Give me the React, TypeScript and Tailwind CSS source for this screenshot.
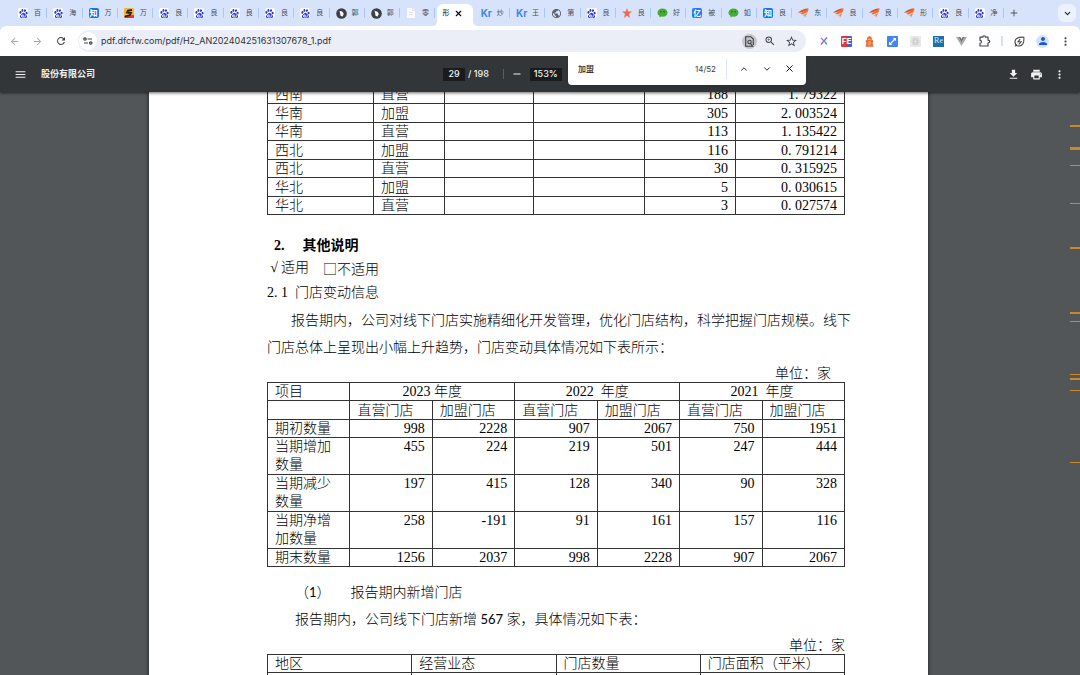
import type { ReactNode } from 'react'
import { ChevronDown, ChevronUp, Plus, X } from 'lucide-react'
import {
  MdArrowBack,
  MdArrowForward,
  MdDownload,
  MdMenu,
  MdMoreVert,
  MdPerson,
  MdPrint,
  MdPublic,
  MdRefresh,
  MdRemove,
  MdStarBorder,
  MdZoomIn,
} from 'react-icons/md'
import { SiBaidu } from 'react-icons/si'

type Favicon = 'baidu' | 'zhihu' | 'wanfang' | 'bird' | 'file' | 'kr' | 'globe' | 'star' | 'wechat' | 'yi' | 'east' | 'none'

interface Tab {
  icon: Favicon
  label: string
  active?: boolean
}

const TABS: Tab[] = [
  { icon: 'baidu', label: '百' },
  { icon: 'baidu', label: '海' },
  { icon: 'zhihu', label: '万' },
  { icon: 'wanfang', label: '万' },
  { icon: 'baidu', label: '良' },
  { icon: 'baidu', label: '良' },
  { icon: 'baidu', label: '良' },
  { icon: 'baidu', label: '良' },
  { icon: 'baidu', label: '良' },
  { icon: 'bird', label: '郭' },
  { icon: 'bird', label: '郭' },
  { icon: 'file', label: '零' },
  { icon: 'none', label: '形', active: true },
  { icon: 'kr', label: '炒' },
  { icon: 'kr', label: '王' },
  { icon: 'globe', label: '第' },
  { icon: 'baidu', label: '良' },
  { icon: 'star', label: '良' },
  { icon: 'wechat', label: '好' },
  { icon: 'yi', label: '被' },
  { icon: 'wechat', label: '如' },
  { icon: 'zhihu', label: '良' },
  { icon: 'east', label: '东' },
  { icon: 'east', label: '良' },
  { icon: 'east', label: '良' },
  { icon: 'east', label: '形' },
  { icon: 'baidu', label: '良' },
  { icon: 'baidu', label: '净' },
]

const REGION_ROWS = [
  ['西南', '直营', '', '', '188', '1. 79322'],
  ['华南', '加盟', '', '', '305', '2. 003524'],
  ['华南', '直营', '', '', '113', '1. 135422'],
  ['西北', '加盟', '', '', '116', '0. 791214'],
  ['西北', '直营', '', '', '30', '0. 315925'],
  ['华北', '加盟', '', '', '5', '0. 030615'],
  ['华北', '直营', '', '', '3', '0. 027574'],
]

const STORE_ROWS = [
  { label: ['期初数量'], values: ['998', '2228', '907', '2067', '750', '1951'] },
  { label: ['当期增加', '数量'], values: ['455', '224', '219', '501', '247', '444'] },
  { label: ['当期减少', '数量'], values: ['197', '415', '128', '340', '90', '328'] },
  { label: ['当期净增', '加数量'], values: ['258', '-191', '91', '161', '157', '116'] },
  { label: ['期末数量'], values: ['1256', '2037', '998', '2228', '907', '2067'] },
]

// search hits along the scroll track: offset from the toolbar and thickness
const HITS = [
  { top: 33, size: 2 },
  { top: 55, size: 3 },
  { top: 73, size: 1 },
  { top: 111, size: 1 },
  { top: 155, size: 2 },
  { top: 220, size: 2 },
  { top: 229, size: 1 },
  { top: 282, size: 1 },
  { top: 286, size: 2 },
  { top: 298, size: 1 },
  { top: 370, size: 1 },
]

function FaviconMark({ icon }: { icon: Favicon }) {
  switch (icon) {
    case 'baidu':
      return (
        <span className="grid size-[10px] place-items-center rounded-[2px] bg-white text-[#2b35dc]">
          <SiBaidu size={9} />
        </span>
      )
    case 'zhihu':
      return (
        <span className="grid size-[10px] place-items-center rounded-[2px] bg-[#1772f6] text-[8px] leading-none font-bold text-white">
          知
        </span>
      )
    case 'yi':
      return (
        <span className="grid size-[10px] place-items-center rounded-[2px] bg-[#2878f5] text-[8px] leading-none font-bold text-white">
          亿
        </span>
      )
    case 'wanfang':
      return (
        <svg width="10" height="10" viewBox="0 0 10 10" aria-hidden="true">
          <rect width="10" height="10" rx="1" fill="#f7b52c" />
          <path d="M0 8l10-1v3H1z" fill="#df3426" />
          <path d="M8 2L4 2.600 3 4.500l4 .5-1 2-5 1.500" fill="none" stroke="#252018" strokeWidth="1.800" />
        </svg>
      )
    case 'bird':
      return (
        <svg width="11" height="11" viewBox="0 0 11 11" aria-hidden="true">
          <circle cx="5.500" cy="5.500" r="5.300" fill="#3a4046" />
          <path d="M3.500 2.800l3 .9 1.300 2.400-1.500 2.600-1.800-1.500z" fill="#fff" />
        </svg>
      )
    case 'file':
      return (
        <svg width="10" height="10" viewBox="0 0 10 10" aria-hidden="true">
          <path d="M1 0h5.500L9 2.500V10H1z" fill="#fafafa" />
          <path d="M6.500 0v2.500H9M3 4.500h4M3 6.500h4" fill="none" stroke="#d5d8dc" strokeWidth=".7" />
        </svg>
      )
    case 'kr':
      return <span className="w-[10px] text-[10px] leading-none font-bold text-[#4285f4]">Kr</span>
    case 'globe':
      return <MdPublic size={11} color="#5f6368" />
    case 'star':
      return (
        <svg width="10" height="10" viewBox="0 0 10 10" aria-hidden="true">
          <path d="M5 0l1.200 3.400L10 3.600 7 6l1 4-3-2.300L2 10l1-4L0 3.600l3.800-.2z" fill="#f26b4b" />
        </svg>
      )
    case 'wechat':
      return (
        <svg width="11" height="10" viewBox="0 0 11 10" aria-hidden="true">
          <path d="M5.500.6c2.900 0 5 1.800 5 4.100s-2.100 4.100-5 4.100l-1.400-.2L2.300 9.600l.2-1.700C1.200 7.100.5 6 .5 4.700.5 2.400 2.600.6 5.500.6z" fill="#45ad35" />
          <circle cx="3.900" cy="3.700" r=".7" fill="#1d5c18" />
          <circle cx="7.100" cy="3.700" r=".7" fill="#1d5c18" />
        </svg>
      )
    case 'east':
      return (
        <svg width="11" height="10" viewBox="0 0 11 10" aria-hidden="true">
          <path d="M0 4.800C2.500 2.200 6 .8 10.500.3L8 3 2.600 4.600z" fill="#e2522a" />
          <path d="M2.300 5.800C5 3.500 8 2.200 10.700.8L9.600 4.300 4.300 6.600z" fill="#f0703a" />
          <path d="M4.400 7.600L9.300 5 7 9.700 6.500 7.600z" fill="#f58a45" />
        </svg>
      )
    default:
      return null
  }
}

function TabItem({ tab }: { tab: Tab }) {
  if (tab.active) {
    return (
      <div className="flex h-[26px] min-w-0 flex-1 items-end px-[2px]">
        <div className="relative flex h-[22px] w-full items-center rounded-t-[6px] bg-white pb-1 pl-[5px]">
          <svg className="absolute bottom-0 -left-[5px]" width="5" height="5" viewBox="0 0 5 5" aria-hidden="true">
            <path d="M5 0v5H0c3 0 5-2 5-5z" fill="#fff" />
          </svg>
          <svg className="absolute -right-[5px] bottom-0" width="5" height="5" viewBox="0 0 5 5" aria-hidden="true">
            <path d="M0 0v5h5C2 5 0 3 0 0z" fill="#fff" />
          </svg>
          <button type="button" role="tab" aria-selected="true" className="text-[7px] leading-[12px] whitespace-nowrap">
            {tab.label}
          </button>
          <button type="button" aria-label="关闭标签页" className="ml-[5px]">
            <X size={9} strokeWidth={3} />
          </button>
        </div>
      </div>
    )
  }
  return (
    <div className="flex h-[26px] min-w-0 flex-1 items-center">
      <button type="button" role="tab" aria-selected="false" className="flex flex-1 items-center gap-[5px] pl-[6px]">
        <span className="flex w-[11px] shrink-0 items-center">
          <FaviconMark icon={tab.icon} />
        </span>
        <span className="text-[7px] leading-[12px] whitespace-nowrap text-[#474b52]">
          {tab.label}
        </span>
      </button>
      <span className="h-[10px] w-px bg-[#a8c7fa]" />
    </div>
  )
}

function IconButton({ label, children }: { label: string; children: ReactNode }) {
  return (
    <button type="button" aria-label={label} className="grid h-[22px] w-[23px] shrink-0 place-items-center">
      {children}
    </button>
  )
}

function Extensions() {
  return (
    <div className="ml-[6px] flex items-center pr-[3px] text-[#45484d]">
      <IconButton label="XPath">
        <svg width="8" height="8" viewBox="0 0 8 8" fill="none" strokeWidth="1.300">
          <path d="M1 1l3 3" stroke="#6d8df0" />
          <path d="M7 0.500L4 4" stroke="#9a58d8" />
          <path d="M4 4L1 7.500" stroke="#c94fc0" />
          <path d="M4 4l3 3.500" stroke="#45b47a" />
        </svg>
      </IconButton>
      <IconButton label="FeHelper">
        <span className="flex h-[11px] w-[11px] items-center justify-center rounded-[1px] bg-linear-to-r from-[#dc3a32] from-50% to-[#3667d8] to-50% text-[8px] leading-none font-bold text-white">
          FE
        </span>
      </IconButton>
      <IconButton label="助手">
        <svg width="9" height="11" viewBox="0 0 9 11">
          <path d="M4.500 0l2.300 1.500v2L8.500 5 7.600 7l.9 3.800H.5L1.400 7 .5 5l1.700-1.500v-2z" fill="#f06c33" />
          <path d="M3 3.300h3M3.500 6h2.500M3 8h3" stroke="#fbd0b0" strokeWidth=".8" />
        </svg>
      </IconButton>
      <IconButton label="截图">
        <svg width="11" height="11" viewBox="0 0 11 11">
          <rect width="11" height="11" rx="1" fill="#4285f4" />
          <path d="M3 8l5-5" stroke="#fff" strokeWidth="1.200" fill="none" />
          <path d="M5.700 2H9v3.300zM5.300 9H2V5.700z" fill="#fff" />
        </svg>
      </IconButton>
      <IconButton label="React Developer Tools">
        <svg width="11" height="11" viewBox="0 0 11 11" fill="none" stroke="#c6c7c9" strokeWidth=".7">
          <rect width="11" height="11" rx="1" fill="#e9e9ea" stroke="none" />
          <ellipse cx="5.500" cy="5.500" rx="4" ry="1.600" />
          <ellipse cx="5.500" cy="5.500" rx="4" ry="1.600" transform="rotate(60 5.500 5.500)" />
          <ellipse cx="5.500" cy="5.500" rx="4" ry="1.600" transform="rotate(120 5.500 5.500)" />
        </svg>
      </IconButton>
      <IconButton label="Reader">
        <span className="grid size-[11px] place-items-center bg-[#1f6fae] font-['Liberation_Serif',serif] text-[8px] leading-none text-[#c9eaf5]">
          Re
        </span>
      </IconButton>
      <IconButton label="Vue.js devtools">
        <svg width="11" height="9" viewBox="0 0 11 9">
          <path d="M0 0h2.300l3.200 5.300L8.700 0H11L5.500 9z" fill="#a9a9a9" />
          <path d="M2.300 0h2l1.200 2L6.700 0h2L5.500 5.300z" fill="#6e6e6e" />
        </svg>
      </IconButton>
      <IconButton label="扩展程序">
        <svg width="12" height="12" viewBox="0 0 12 12" fill="none" stroke="currentColor" strokeWidth="1.200" strokeLinejoin="round">
          <path d="M1 2.200h2.700c0-1.900 2.700-1.900 2.700 0H9v3c2.300 0 2.300 2.800 0 2.800v3H1V8.300c2 0 2-3 0-3z" />
        </svg>
      </IconButton>
      <span className="mx-[5px] h-[10px] w-[2px] bg-[#d3e3fd]" />
      <IconButton label="性能">
        <svg width="11" height="11" viewBox="0 0 11 11" fill="none" stroke="currentColor" strokeWidth="1.100">
          <path d="M9.800 1.200C5 .8 1 2 1 5.800 1 8.500 3 10 5.300 10 8.800 10 10.300 6.500 9.800 1.200zM2.500 8.800L.8 10.300" />
          <path d="M6.200 3L4 5.800h3L4.800 8.300" />
        </svg>
      </IconButton>
      <IconButton label="个人资料">
        <span className="grid size-[13px] place-items-center rounded-full bg-[#d3e3fd] text-[#1a5ad0]">
          <MdPerson size={12} />
        </span>
      </IconButton>
      <IconButton label="更多">
        <MdMoreVert size={13} />
      </IconButton>
    </div>
  )
}

function FindBar() {
  return (
    <div className="absolute top-full right-0 z-20 flex h-[33px] w-[238px] items-center rounded-[4px] bg-white pr-[5px] pl-[10px] shadow-md">
      <input
        aria-label="在网页中查找"
        defaultValue="加盟"
        className="min-w-0 flex-1 text-[8px] font-medium text-[#1f1f1f] outline-none"
      />
      <span className="text-[8px] text-[#3c4043]">14/52</span>
      <span className="mr-[5px] ml-[10px] h-[20px] w-px bg-[#d9e5fb]" />
      <IconButton label="上一个">
        <ChevronUp size={10} strokeWidth={2} />
      </IconButton>
      <IconButton label="下一个">
        <ChevronDown size={10} strokeWidth={2} />
      </IconButton>
      <IconButton label="关闭">
        <X size={11} strokeWidth={2} />
      </IconButton>
    </div>
  )
}

function AddressRow() {
  return (
    <div className="flex h-[30px] items-center rounded-t-[6px] bg-white pl-[3px]">
      <span className="flex text-[#a5a8ac]">
        <IconButton label="后退">
          <MdArrowBack size={11} />
        </IconButton>
        <IconButton label="前进">
          <MdArrowForward size={11} />
        </IconButton>
      </span>
      <IconButton label="重新加载">
        <MdRefresh size={12} color="#3c4043" />
      </IconButton>
      <div className="relative ml-[6px] flex h-[22px] min-w-0 flex-1 items-center rounded-full bg-[#ebeef7] pr-[5px] pl-px">
        <button type="button" aria-label="查看网站信息" className="grid size-[18px] shrink-0 place-items-center rounded-full bg-white">
          <svg width="10" height="8" viewBox="0 0 10 8" fill="none" stroke="#3c4043" strokeWidth="1.200">
            <circle cx="2" cy="2" r="1.200" />
            <path d="M4.500 2H9M1 6h4" />
            <circle cx="7.800" cy="6" r="1.200" />
          </svg>
        </button>
        <input
          aria-label="地址"
          defaultValue="pdf.dfcfw.com/pdf/H2_AN202404251631307678_1.pdf"
          className="ml-1 min-w-0 flex-1 text-[9px] text-[#303338] outline-none"
        />
        <div className="flex gap-px text-[#3c4043]">
          <button type="button" aria-label="查找" className="grid size-5 place-items-center">
            <span className="grid size-[15px] place-items-center rounded-full bg-[#c4c6cb]">
              <svg width="9" height="11" viewBox="0 0 9 11" fill="none" stroke="currentColor" strokeWidth="1.100">
                <path d="M8.300 9V3L5.800.7H.7v9.600h7L5.500 7.500" />
                <circle cx="4.500" cy="6" r="1.700" />
              </svg>
            </span>
          </button>
          <button type="button" aria-label="缩放" className="grid size-5 place-items-center">
            <MdZoomIn size={12} />
          </button>
          <button type="button" aria-label="添加书签" className="grid size-5 place-items-center">
            <MdStarBorder size={13} />
          </button>
        </div>
        <FindBar />
      </div>
      <Extensions />
    </div>
  )
}

function ViewerToolbar() {
  return (
    <div className="relative z-10 grid h-[36px] shrink-0 grid-cols-[1fr_194px_1fr] items-center bg-[#323639] text-[#f1f1f1] shadow-[0_1px_3px_rgba(0,0,0,0.6)]">
      <div className="flex items-center gap-[14px] pl-[14px]">
        <button type="button" aria-label="菜单">
          <MdMenu size={13} />
        </button>
        <h1 className="text-[9px] font-bold">股份有限公司</h1>
      </div>
      <div className="flex items-center text-[9px] font-medium">
        <input aria-label="页码" defaultValue="29" className="h-[13px] w-[22px] bg-[#191b1c] text-center outline-none" />
        <span className="ml-[3px]">/ 198</span>
        <span className="ml-[14px] h-[10px] w-px bg-[#5c5f61]" />
        <button type="button" aria-label="缩小" className="ml-[7px]">
          <MdRemove size={12} />
        </button>
        <input aria-label="缩放比例" defaultValue="153%" className="ml-[7px] h-[13px] w-[32px] bg-[#191b1c] text-center outline-none" />
      </div>
      <div className="flex items-center justify-end pr-[9px]">
        <IconButton label="下载">
          <MdDownload size={13} />
        </IconButton>
        <IconButton label="打印">
          <MdPrint size={13} />
        </IconButton>
        <IconButton label="更多操作">
          <MdMoreVert size={13} />
        </IconButton>
      </div>
    </div>
  )
}

function RegionTable() {
  return (
    <table className="-mt-[7px] w-full table-fixed border-collapse leading-[17px]">
      <colgroup>
        <col className="w-[106px]" />
        <col className="w-[71px]" />
        <col className="w-[89px]" />
        <col className="w-[111px]" />
        <col className="w-[91px]" />
        <col />
      </colgroup>
      <tbody>
        {REGION_ROWS.map((row, i) => (
          <tr key={i} className="h-[18px] even:h-[19px]">
            {row.map((cell, j) => (
              <td key={j} className={j > 3 ? 'border border-[#333] px-[7px] text-right' : 'border border-[#333] px-[7px]'}>
                {cell}
              </td>
            ))}
          </tr>
        ))}
      </tbody>
    </table>
  )
}

function StoreTable() {
  return (
    <table className="w-full table-fixed border-collapse leading-[17px]">
      <thead>
        <tr className="h-[18px]">
          <th scope="col" className="border border-[#333] px-[7px] text-left font-light">项目</th>
          <th scope="colgroup" colSpan={2} className="border border-[#333] font-light">2023 年度</th>
          <th scope="colgroup" colSpan={2} className="border border-[#333] font-light">2022&nbsp; 年度</th>
          <th scope="colgroup" colSpan={2} className="border border-[#333] font-light">2021&nbsp; 年度</th>
        </tr>
        <tr className="h-[19px]">
          <td className="border border-[#333]" />
          {[0, 1, 2, 3, 4, 5].map((i) => (
            <th key={i} scope="col" className="border border-[#333] px-[7px] text-left font-light">
              {i % 2 === 0 ? '直营门店' : '加盟门店'}
            </th>
          ))}
        </tr>
      </thead>
      <tbody>
        {STORE_ROWS.map((row) => (
          <tr key={row.label[0]} className={row.label.length > 1 ? 'leading-[18px]' : 'h-[18px]'}>
            <th scope="row" className="border border-[#333] px-[7px] text-left align-top font-light">
              {row.label.map((line) => (
                <span key={line} className="block">{line}</span>
              ))}
            </th>
            {row.values.map((value, i) => (
              <td key={i} className="border border-[#333] px-[7px] text-right align-top">{value}</td>
            ))}
          </tr>
        ))}
      </tbody>
    </table>
  )
}

function NewStoreTable() {
  return (
    <table className="w-full table-fixed border-collapse leading-[17px]">
      <thead>
        <tr className="h-[18px]">
          {['地区', '经营业态', '门店数量', '门店面积（平米）'].map((name) => (
            <th key={name} scope="col" className="border border-[#333] px-[7px] text-left font-light">{name}</th>
          ))}
        </tr>
      </thead>
      <tbody>
        <tr className="h-[18px]">
          {[0, 1, 2, 3].map((i) => (
            <td key={i} className="border border-[#333]" />
          ))}
        </tr>
      </tbody>
    </table>
  )
}

function DocumentPage() {
  return (
    <article className="mx-auto w-[779px] bg-white pr-[83px] pl-[118px] font-['Liberation_Serif','Noto_Sans_CJK_SC',serif] text-[14px] font-light text-black shadow-[0_0_4px_rgba(0,0,0,0.7)]">
      <RegionTable />
      <h2 className="mt-5 flex gap-[18px] pl-[7px] leading-[22px] font-bold">
        <span>2.</span>
        <span>其他说明</span>
      </h2>
      <p className="flex leading-[22px]">
        <span className="w-[14px] text-center">√</span>
        <span>适用</span>
        <span className="ml-[14px] font-['Noto_Sans_CJK_SC',sans-serif]">□不适用</span>
      </p>
      <h3 className="leading-[28px]">2. 1&nbsp; 门店变动信息</h3>
      <p className="leading-[27px] whitespace-nowrap">
        <span className="pl-6">报告期内，公司对线下门店实施精细化开发管理，优化门店结构，科学把握门店规模。线下</span>
        <br />
        门店总体上呈现出小幅上升趋势，门店变动具体情况如下表所示：
      </p>
      <p className="pt-1 pr-[14px] text-right leading-[17px]">单位：家</p>
      <StoreTable />
      <h3 className="mt-3 flex gap-5 pl-7 leading-[27px]">
        <span>
          （<span className="font-['Lato',sans-serif] text-[13px] font-normal">1</span>）
        </span>
        <span>报告期内新增门店</span>
      </h3>
      <p className="pl-7 leading-[27px]">
        报告期内，公司线下门店新增 <span className="font-['Lato',sans-serif] text-[13px] font-normal">567</span> 家，具体情况如下表：
      </p>
      <p className="pt-1 text-right leading-[17px]">单位：家</p>
      <NewStoreTable />
    </article>
  )
}

export default function App() {
  return (
    <div className="flex h-screen flex-col overflow-hidden bg-[#525659] font-['Inter','Noto_Sans_CJK_SC',sans-serif]">
      <header className="relative z-20 shrink-0 bg-[#d7e3fb]">
        <div className="flex h-[26px] items-center pr-1 pl-3">
          <div role="tablist" className="flex min-w-0 flex-1">
            {TABS.map((tab, i) => (
              <TabItem key={i} tab={tab} />
            ))}
          </div>
          <button type="button" aria-label="新标签页" className="grid w-5 place-items-center text-[#3c4043]">
            <Plus size={10} strokeWidth={2} />
          </button>
          <button type="button" aria-label="搜索标签页" className="ml-[34px] grid size-[18px] place-items-center rounded-[6px] bg-[#ecf2fd] text-[#1f1f1f]">
            <ChevronDown size={9} strokeWidth={3} />
          </button>
        </div>
        <AddressRow />
      </header>
      <ViewerToolbar />
      <main className="relative flex-1 overflow-hidden pr-[3px]">
        <DocumentPage />
        <div aria-hidden="true" className="absolute inset-y-0 right-0 w-[10px]">
          {HITS.map((hit) => (
            <span
              key={hit.top}
              className="absolute inset-x-0 bg-[#c68a2c]"
              style={{ top: hit.top, height: hit.size }}
            />
          ))}
        </div>
      </main>
    </div>
  )
}
